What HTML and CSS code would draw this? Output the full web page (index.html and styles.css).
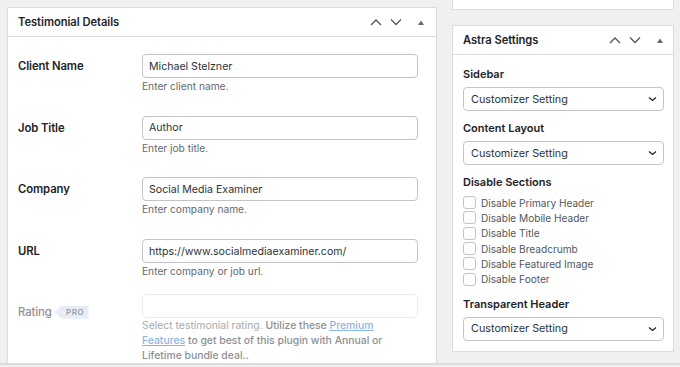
FILE: index.html
```html
<!DOCTYPE html>
<html lang="en">
<head>
<meta charset="utf-8">
<title>Testimonial Details</title>
<link rel="stylesheet" href="styles.css">
</head>
<body>
<div class="frame">
  <section class="panel main">
    <header class="panel-head">
      <h2 class="panel-title">Testimonial Details</h2>
      <div class="head-actions">
        <span class="hbtn"><svg width="12" height="8" viewBox="0 0 12 8"><polyline points="1,7 6,2 11,7" fill="none" stroke="#50575e" stroke-width="1.3"/></svg></span>
        <span class="hbtn"><svg width="12" height="8" viewBox="0 0 12 8"><polyline points="1,1.5 6,6.5 11,1.5" fill="none" stroke="#50575e" stroke-width="1.3"/></svg></span>
        <span class="hbtn tri"><svg width="6" height="5" viewBox="0 0 6 5"><polygon points="0,5 3,0.5 6,5" fill="#646970"/></svg></span>
      </div>
    </header>
    <div class="panel-body">
      <div class="row">
        <div class="lbl">Client Name</div>
        <div class="fld">
          <input class="inp" type="text" value="Michael Stelzner">
          <p class="desc">Enter client name.</p>
        </div>
      </div>
      <div class="row">
        <div class="lbl">Job Title</div>
        <div class="fld">
          <input class="inp" type="text" value="Author">
          <p class="desc">Enter job title.</p>
        </div>
      </div>
      <div class="row">
        <div class="lbl">Company</div>
        <div class="fld">
          <input class="inp" type="text" value="Social Media Examiner">
          <p class="desc">Enter company name.</p>
        </div>
      </div>
      <div class="row row-url">
        <div class="lbl">URL</div>
        <div class="fld">
          <input class="inp" type="text" value="https://www.socialmediaexaminer.com/">
          <p class="desc">Enter company or job url.</p>
        </div>
      </div>
      <div class="row row-rating">
        <div class="lbl lbl-muted">Rating <span class="pro">PRO</span></div>
        <div class="fld">
          <div class="inp inp-disabled"></div>
          <p class="desc desc-rating"><span class="light">Select testimonial rating.</span> Utilize these <a class="link" href="#">Premium Features</a> to get best of this plugin with Annual or Lifetime bundle deal..</p>
        </div>
      </div>
    </div>
  </section>

  <aside class="side">
    <div class="panel stub"></div>
    <section class="panel astra">
      <header class="panel-head">
        <h2 class="panel-title">Astra Settings</h2>
        <div class="head-actions">
          <span class="hbtn"><svg width="12" height="8" viewBox="0 0 12 8"><polyline points="1,7 6,2 11,7" fill="none" stroke="#50575e" stroke-width="1.3"/></svg></span>
          <span class="hbtn"><svg width="12" height="8" viewBox="0 0 12 8"><polyline points="1,1.5 6,6.5 11,1.5" fill="none" stroke="#50575e" stroke-width="1.3"/></svg></span>
          <span class="hbtn tri"><svg width="6" height="5" viewBox="0 0 6 5"><polygon points="0,5 3,0.5 6,5" fill="#646970"/></svg></span>
        </div>
      </header>
      <div class="astra-body">
        <div class="s-label">Sidebar</div>
        <div class="select"><span>Customizer Setting</span><svg width="9" height="6" viewBox="0 0 9 6"><polyline points="1,1.5 4.5,4.5 8,1.5" fill="none" stroke="#1d2327" stroke-width="1.3"/></svg></div>

        <div class="s-label">Content Layout</div>
        <div class="select"><span>Customizer Setting</span><svg width="9" height="6" viewBox="0 0 9 6"><polyline points="1,1.5 4.5,4.5 8,1.5" fill="none" stroke="#1d2327" stroke-width="1.3"/></svg></div>

        <div class="s-label">Disable Sections</div>
        <ul class="checks">
          <li><span class="cb"></span>Disable Primary Header</li>
          <li><span class="cb"></span>Disable Mobile Header</li>
          <li><span class="cb"></span>Disable Title</li>
          <li><span class="cb"></span>Disable Breadcrumb</li>
          <li><span class="cb"></span>Disable Featured Image</li>
          <li><span class="cb"></span>Disable Footer</li>
        </ul>

        <div class="s-label">Transparent Header</div>
        <div class="select"><span>Customizer Setting</span><svg width="9" height="6" viewBox="0 0 9 6"><polyline points="1,1.5 4.5,4.5 8,1.5" fill="none" stroke="#1d2327" stroke-width="1.3"/></svg></div>
      </div>
    </section>
  </aside>
</div>
</body>
</html>
```
FILE: styles.css
```css
* { box-sizing: border-box; }

html, body {
  margin: 0;
  padding: 0;
  background: #f0f0f1;
}

body {
  font-family: Inter, "Noto Sans", "Liberation Sans", sans-serif;
  color: #1d2327;
  font-size: 11px;
}

.frame {
  height: 365px;
  border-bottom: 2px solid #dcdcde;
  overflow: hidden;
  display: flex;
  align-items: flex-start;
  padding-left: 7px;
  gap: 15px;
}

.panel {
  background: #fff;
  border: 1px solid #dcdcde;
}

.main {
  width: 430px;
  margin-top: 7px;
  height: 400px;
  border-bottom: none;
}

.panel-head {
  height: 29px;
  border-bottom: 1px solid #dcdcde;
  display: flex;
  align-items: center;
  justify-content: space-between;
  padding-left: 10px;
  padding-right: 5px;
}

.panel-title {
  margin: 0;
  font-size: 11.2px;
  font-weight: 600;
  letter-spacing: -0.05px;
}

.head-actions {
  display: flex;
  align-items: center;
}

.hbtn {
  width: 20px;
  height: 20px;
  display: flex;
  align-items: center;
  justify-content: center;
}

.hbtn.tri { margin-left: 5px; }

.panel-body {
  padding: 17px 18px 0 10px;
}

.row {
  display: grid;
  grid-template-columns: 124px 276px;
  align-items: start;
  margin-bottom: 22.7px;
}

.row-url { margin-bottom: 16px; }

.lbl {
  font-weight: 600;
  font-size: 11.3px;
  line-height: 24px;
  height: 24px;
  letter-spacing: -0.1px;
}

.lbl-muted {
  color: #8c8f94;
  font-weight: 500;
  margin-top: 6px;
  display: flex;
  align-items: center;
}

.pro {
  display: inline-flex;
  align-items: center;
  justify-content: center;
  margin-left: 3px;
  height: 13px;
  width: 34px;
  padding-left: 7px;
  background: #e7ecf7;
  color: #8a93a6;
  font-size: 8px;
  font-weight: 500;
  letter-spacing: 0.6px;
  line-height: 13px;
  clip-path: polygon(0 50%, 7px 0, 100% 0, 100% 100%, 7px 100%);
}

.fld { display: flex; flex-direction: column; }

.inp {
  display: block;
  width: 276px;
  height: 24px;
  margin: 0;
  padding: 0 6px;
  border: 1px solid #c3c4c7;
  border-radius: 4px;
  font-family: Inter, "Noto Sans", "Liberation Sans", sans-serif;
  font-size: 10.6px;
  color: #2c3338;
  background: #fff;
  outline: none;
}

.inp-disabled {
  border-color: #ececee;
}

.desc {
  margin: 1px 0 0;
  font-size: 10.2px;
  line-height: 14px;
  color: #646970;
}

.desc-rating {
  margin-top: 0;
  line-height: 15px;
  color: #8c8f94;
  font-weight: 500;
  font-size: 10.4px;
  width: 262px;
}

.desc-rating .light {
  color: #a7aaad;
  font-weight: 400;
}

.link {
  color: #8ab4e8;
  text-decoration: underline;
}

.side {
  width: 222px;
  display: flex;
  flex-direction: column;
  gap: 15px;
}

.stub {
  height: 10px;
  border-top: none;
}

.astra {
  width: 222px;
}

.astra .panel-head { padding-right: 3px; }

.astra-body {
  padding: 11px 9px 10px 10px;
}

.s-label {
  font-size: 11px;
  font-weight: 600;
  line-height: 16px;
  color: #1d2327;
  margin-bottom: 5px;
}

.select {
  height: 24px;
  border: 1px solid #c3c4c7;
  border-radius: 4px;
  display: flex;
  align-items: center;
  justify-content: space-between;
  padding: 0 6px 0 7px;
  font-size: 10.8px;
  color: #2c3338;
  margin-bottom: 9px;
}

.select:last-child { margin-bottom: 0; }

.checks {
  list-style: none;
  margin: 0 0 9px;
  padding: 0;
}

.checks li {
  display: flex;
  align-items: center;
  height: 15.3px;
  font-size: 10.1px;
  color: #50575e;
}

.cb {
  width: 13px;
  height: 13px;
  border: 1px solid #c3c4c7;
  border-radius: 3px;
  background: #fff;
  margin-right: 5px;
  flex: none;
}
```
